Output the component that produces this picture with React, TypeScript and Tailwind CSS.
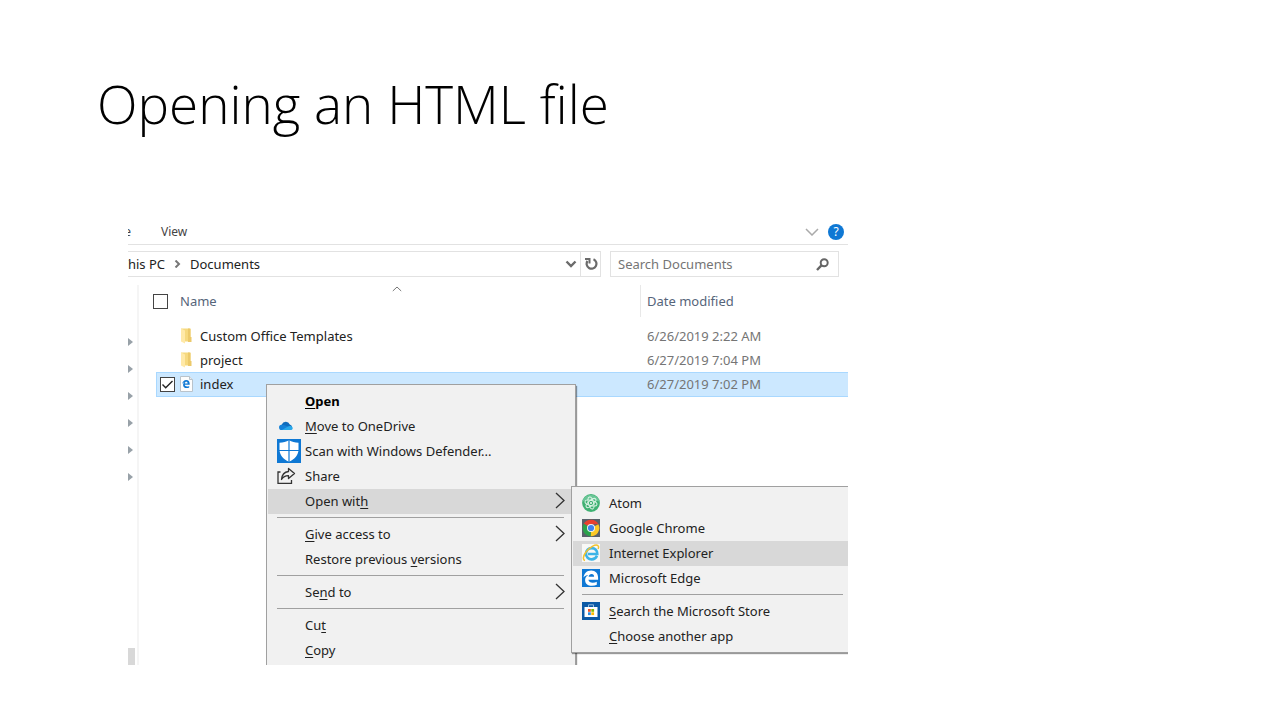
import type { ReactNode } from "react";

const files = [
  { name: "Custom Office Templates", date: "6/26/2019 2:22 AM", kind: "folder", selected: false },
  { name: "project", date: "6/27/2019 7:04 PM", kind: "folder", selected: false },
  { name: "index", date: "6/27/2019 7:02 PM", kind: "html", selected: true },
];

function FolderIcon() {
  return (
    <svg width="12" height="16" viewBox="0 0 12 16" aria-hidden="true" className="shrink-0">
      <path d="M1 .5h8.500l1 1v12H3z" fill="#f6d97f" />
      <path d="M8 .5h2.500v8.500H11.500v5H8z" fill="#ecc96a" />
      <path d="M1 .5l4 2v13L1 13.500z" fill="#ffe9a8" />
    </svg>
  );
}

function HtmlIcon() {
  return (
    <svg width="13" height="16" viewBox="0 0 13 16" aria-hidden="true" className="shrink-0">
      <path d="M.5.5h9l3 3v12H.5z" fill="#fdfdfd" stroke="#b9c3cb" />
      <path d="M9.500.5v3h3" fill="#e6eaed" stroke="#b9c3cb" />
      <g transform="translate(2 3.500) scale(.52)">
        <path d="M.5 8.500C1.100 4.300 3.800 1 8.200 1c4.300 0 6.600 3 6.600 7v2.300H5.300c.3 2 2 3 4.500 3 1.500 0 2.900-.4 4-1v3c-1.300.8-2.900 1.200-4.800 1.200-4.400 0-6.900-2.400-6.900-6 0-2.300 1.200-4 3.300-5C3.300 5.700 1.700 7 .5 8.500zm4.900-1h5.400c0-1.900-.8-3-2.500-3-1.600 0-2.600 1.200-2.900 3z" fill="#0f78d4" />
      </g>
    </svg>
  );
}

function OneDriveIcon() {
  return (
    <svg width="14" height="10" viewBox="0 0 14 10" aria-hidden="true" className="ml-0.5">
      <path d="M4 8.500A3.200 3.200 0 0 1 2.800 3.600 4.300 4.300 0 0 1 10.800 3.400 2.900 2.900 0 0 1 11 9H4z" fill="#0f6cbd" />
      <path d="M2.700 9A2.600 2.600 0 0 1 2.600 3.800C5 3.500 7 4.800 9 5.800L11.500 9z" fill="#1480d8" />
      <path d="M3 9l5.500-3.300c1.500-1 4.800-1 5.200 1.200C13.800 8.300 12.800 9 11.500 9z" fill="#28a8ea" />
    </svg>
  );
}

function DefenderIcon() {
  return (
    <svg width="24" height="24" viewBox="0 0 24 24" aria-hidden="true">
      <path d="M0 0h24v24H0z" fill="#0f78d4" />
      <path d="M12 1.200c2.800 1.700 5.800 2.400 9.500 2.600v6.700c0 5.500-3.700 9.500-9.500 12.300-5.800-2.800-9.500-6.800-9.500-12.300V3.800c3.700-.2 6.700-.9 9.500-2.600z" fill="#fff" />
      <path d="M12 1v22M2 11.500h20" stroke="#0f78d4" strokeWidth="1.200" />
    </svg>
  );
}

function ShareIcon() {
  return (
    <svg width="19" height="18" viewBox="0 0 19 18" fill="none" stroke="#333" strokeWidth="1.300" aria-hidden="true">
      <path d="M3.500 5H1v11.300h13.500V13" />
      <path d="M11.500 1.500l6 5-6 5V8.700C8.300 8.600 6.200 9.800 4.500 12.500 4.900 8 7.300 5 11.500 4.500z" strokeLinejoin="round" />
    </svg>
  );
}

function AtomIcon() {
  return (
    <svg width="18" height="18" viewBox="0 0 19 19" fill="none" aria-hidden="true">
      <circle cx="9.500" cy="9.500" r="9.400" fill="#3fb172" />
      <path d="M.5 8a9.200 9.200 0 0 1 18 0c-5-2-12-2-18 0z" fill="#69c596" />
      <g stroke="#dff5e8" strokeWidth="1">
        <ellipse cx="9.500" cy="9.500" rx="2.700" ry="6.500" transform="rotate(-15 9.500 9.500)" />
        <ellipse cx="9.500" cy="9.500" rx="2.700" ry="6.500" transform="rotate(48 9.500 9.500)" />
        <ellipse cx="9.500" cy="9.500" rx="2.700" ry="6.500" transform="rotate(105 9.500 9.500)" />
      </g>
      <circle cx="9.500" cy="9.500" r="1" fill="#fff" />
    </svg>
  );
}

function ChromeIcon() {
  return (
    <svg width="18" height="18" viewBox="0 0 18 18" aria-hidden="true">
      <path d="M0 0h18v18H0z" fill="#59616b" />
      <path d="M9 9L1.800 4.800A8.300 8.300 0 0 1 16.400 5.200H9z" fill="#e8402f" />
      <path d="M9 9l7.400-3.800A8.300 8.300 0 0 1 8.600 17.300z" fill="#fbc926" />
      <path d="M9 9l-.4 8.300A8.300 8.300 0 0 1 1.800 4.800z" fill="#2ba24c" />
      <circle cx="9" cy="9" r="4" fill="#f3f5f5" />
      <circle cx="9" cy="9" r="3.100" fill="#3f83ee" />
    </svg>
  );
}

function ExplorerIcon() {
  return (
    <svg width="18" height="18" viewBox="0 0 18 18" fill="none" aria-hidden="true">
      <path d="M0 0h18v18H0z" fill="#f8f8f6" />
      <path d="M15 11.800c-1 2.400-3 3.600-5.300 3.600-3.300 0-5.700-2.500-5.700-5.700s2.400-5.600 5.700-5.600c3.400 0 5.600 2.300 5.600 5.900H6" stroke="#3db4e7" strokeWidth="2.600" />
      <path d="M3 16.500c-2.500-.4-2-4.500 1-8.500 3.500-4.700 9.500-8 11.800-6.500 1 .7.900 2.200.3 3.500" stroke="#f2c230" strokeWidth="1.500" />
    </svg>
  );
}

function EdgeIcon() {
  return (
    <svg width="18" height="18" viewBox="0 0 18 18" aria-hidden="true">
      <path d="M0 0h18v18H0z" fill="#0f78d4" />
      <path d="M1.500 8.500C2.100 4.300 4.800 1.500 9.200 1.500c4.300 0 6.900 3 6.900 7.200v2H6.400c.3 2 2 3 4.400 3 1.500 0 2.900-.4 4-1v3c-1.300.7-2.900 1.100-4.800 1.100-4.300 0-6.900-2.400-6.900-5.900 0-2.200 1.200-4 3.300-5C4.300 6 2.600 7 1.500 8.500zm5.100-.8h5.500c0-1.700-.8-2.600-2.500-2.600-1.600 0-2.600 1-3 2.600z" fill="#fff" />
    </svg>
  );
}

function StoreIcon() {
  return (
    <svg width="18" height="18" viewBox="0 0 18 18" aria-hidden="true">
      <path d="M0 0h18v18H0z" fill="#0b59a5" />
      <path d="M6.500 5V2.800h5V5" fill="none" stroke="#8fb8dd" />
      <path d="M2.500 5h13v10h-13z" fill="#fff" />
      <path d="M6 7h2.800v2.800H6z" fill="#f25022" />
      <path d="M9.300 7h2.800v2.800H9.300z" fill="#7fba00" />
      <path d="M6 10.300h2.800v2.800H6z" fill="#2a8fe0" />
      <path d="M9.300 10.300h2.800v2.800H9.300z" fill="#ffb900" />
    </svg>
  );
}

function Hot({ children }: { children: ReactNode }) {
  return <span className="underline underline-offset-2">{children}</span>;
}

type ItemProps = { icon?: ReactNode; active?: boolean; arrow?: boolean; bold?: boolean; sub?: boolean; children: ReactNode };

function MenuItem({ icon, active, arrow, bold, sub, children }: ItemProps) {
  return (
    <button
      type="button"
      role="menuitem"
      className={`flex h-[25px] w-full items-center pb-px pl-[9px] text-left whitespace-nowrap ${active ? "bg-[#d8d8d8]" : ""} ${bold ? "font-bold text-black" : ""}`}
    >
      <span className={`flex shrink-0 items-center ${sub ? "w-[27px]" : "w-7"}`}>{icon}</span>
      <span className="flex-1">{children}</span>
      {arrow && (
        <svg width="10" height="18" viewBox="0 0 10 18" fill="none" stroke="#333" strokeWidth="1.300" aria-hidden="true" className="mr-[9px]">
          <path d="M1 1l8 7.500L1 16" />
        </svg>
      )}
    </button>
  );
}

function Separator() {
  return (
    <div role="separator" className="h-2 pt-[3px] pr-2.5 pl-[9px]">
      <div className="h-px bg-[#a0a0a0]" />
    </div>
  );
}

function AddressBar() {
  return (
    <div className="mt-1.5 flex h-[26px] gap-[9px] pr-[9px]">
      <div className="flex min-w-0 flex-1 items-center border border-l-0 border-[#e2e2e2]">
        <button type="button" className="flex w-[37px] justify-end overflow-hidden whitespace-nowrap">This PC</button>
        <svg width="7" height="8" viewBox="0 0 7 8" fill="none" stroke="#777" strokeWidth="2" aria-hidden="true" className="mx-[9px]">
          <path d="M1.500.5L5 4 1.500 7.500" />
        </svg>
        <button type="button">Documents</button>
        <button type="button" aria-label="Previous locations" className="mr-[3px] ml-auto">
          <svg width="12" height="8" viewBox="0 0 12 8" fill="none" stroke="#6b6b6b" strokeWidth="2.400">
            <path d="M1.500 1.500L6 6l4.500-4.500" />
          </svg>
        </button>
        <button type="button" aria-label="Refresh" className="flex h-full w-5 items-center justify-center border-l border-[#e2e2e2]">
          <svg width="14" height="14" viewBox="0 0 14 14" fill="none" stroke="#6b6b6b" strokeWidth="2.200">
            <path d="M9.500 2.300A4.900 4.900 0 1 1 3.500 4" />
            <path d="M1 1.900h4.500v4.600" strokeWidth="2" />
          </svg>
        </button>
      </div>
      <div className="flex w-[229px] items-center border border-[#e2e2e2] pr-[9px] pl-[7px]">
        <input type="search" aria-label="Search Documents" placeholder="Search Documents" className="min-w-0 flex-1 outline-none placeholder:text-[#757575]" />
        <svg width="13" height="13" viewBox="0 0 13 13" fill="none" stroke="#666" strokeWidth="2" aria-hidden="true">
          <circle cx="8.200" cy="4.700" r="3.500" />
          <path d="M5.700 7.200L1 12" strokeWidth="2.400" />
        </svg>
      </div>
    </div>
  );
}

function CheckBox({ checked, label }: { checked?: boolean; label: string }) {
  return (
    <span className="relative block size-[15px]">
      <input type="checkbox" aria-label={label} defaultChecked={checked} className="block size-[15px] appearance-none border border-[#444] bg-white" />
      {checked && (
        <svg width="15" height="15" viewBox="0 0 15 15" fill="none" stroke="#222" strokeWidth="1.400" aria-hidden="true" className="pointer-events-none absolute inset-0">
          <path d="M2.500 7.500l3.200 3.200L12.500 4" />
        </svg>
      )}
    </span>
  );
}

function FileList() {
  return (
    <table className="ml-2.5 flex-1 table-fixed border-collapse text-left">
      <colgroup>
        <col className="w-[7px]" />
        <col className="w-6" />
        <col />
        <col className="w-[208px]" />
      </colgroup>
      <thead className="text-[#56657a]">
        <tr>
          <th colSpan={2} className="h-[39px] p-0 align-top">
            <div className="flex h-8 items-center pl-1">
              <CheckBox label="Select all" />
            </div>
          </th>
          <th className="relative p-0 align-top font-normal">
            <div className="flex h-8 items-center">Name</div>
            <svg width="10" height="6" viewBox="0 0 10 6" fill="none" stroke="#777" aria-hidden="true" className="absolute top-px left-[46%]">
              <path d="M.8 5L5 1l4.200 4" />
            </svg>
          </th>
          <th className="p-0 align-top font-normal">
            <div className="flex h-8 items-center border-l border-[#e8e8e8] pl-1.5">Date modified</div>
          </th>
        </tr>
      </thead>
      <tbody>
        {files.map((f) => {
          const fill = f.selected ? "border-y border-[#a9d8ff] bg-[#cce8ff]" : "";
          return (
            <tr key={f.name} className="h-6">
              <td className="p-0" />
              <td className={`p-0 pl-[3px] ${fill} ${f.selected ? "border-l" : ""}`}>
                {f.selected && <CheckBox checked label={`Select ${f.name}`} />}
              </td>
              <td className={`p-0 ${fill}`}>
                <div className="flex items-center">
                  <span className="w-5">{f.kind === "folder" ? <FolderIcon /> : <HtmlIcon />}</span>
                  {f.name}
                </div>
              </td>
              <td className={`p-0 pl-[7px] text-[#757575] ${fill}`}>{f.date}</td>
            </tr>
          );
        })}
      </tbody>
    </table>
  );
}

function NavPane() {
  return (
    <nav aria-label="Folders" className="flex w-[11px] shrink-0 flex-col justify-between border-r-2 border-[#f5f5f5] pt-[43px]">
      <div>
        {[0, 1, 2, 3, 4, 5].map((n) => (
          <button key={n} type="button" aria-label="Expand" className="flex h-[27px] items-center">
            <svg width="5" height="8" viewBox="0 0 5 8" aria-hidden="true">
              <path d="M0 0l5 4-5 4z" fill="#98a1a8" />
            </svg>
          </button>
        ))}
      </div>
      <div className="h-[17px] w-[7px] bg-[#d8d8d8]" />
    </nav>
  );
}

function ContextMenu() {
  return (
    <div role="menu" aria-label="File actions" className="absolute top-[164px] left-[138px] w-[310px] border border-[#a0a0a0] bg-[#f1f1f1] px-px py-1 shadow-[1px_2px_1px_rgba(0,0,0,0.4)]">
      <MenuItem bold><Hot>O</Hot>pen</MenuItem>
      <MenuItem icon={<OneDriveIcon />}><Hot>M</Hot>ove to OneDrive</MenuItem>
      <MenuItem icon={<DefenderIcon />}>Scan with Windows Defender...</MenuItem>
      <MenuItem icon={<ShareIcon />}>Share</MenuItem>
      <MenuItem active arrow>Open wit<Hot>h</Hot></MenuItem>
      <Separator />
      <MenuItem arrow><Hot>G</Hot>ive access to</MenuItem>
      <MenuItem>Restore previous <Hot>v</Hot>ersions</MenuItem>
      <Separator />
      <MenuItem arrow>Se<Hot>n</Hot>d to</MenuItem>
      <Separator />
      <MenuItem>Cu<Hot>t</Hot></MenuItem>
      <MenuItem><Hot>C</Hot>opy</MenuItem>
    </div>
  );
}

function OpenWithMenu() {
  return (
    <div role="menu" aria-label="Open with" className="absolute top-[266px] left-[443px] w-[284px] border border-[#a0a0a0] bg-[#f1f1f1] px-px pt-1 pb-[3px] shadow-[1px_1px_1px_rgba(0,0,0,0.4)]">
      <MenuItem sub icon={<AtomIcon />}>Atom</MenuItem>
      <MenuItem sub icon={<ChromeIcon />}>Google Chrome</MenuItem>
      <MenuItem sub active icon={<ExplorerIcon />}>Internet Explorer</MenuItem>
      <MenuItem sub icon={<EdgeIcon />}>Microsoft Edge</MenuItem>
      <Separator />
      <MenuItem sub icon={<StoreIcon />}><Hot>S</Hot>earch the Microsoft Store</MenuItem>
      <MenuItem sub><Hot>C</Hot>hoose another app</MenuItem>
    </div>
  );
}

export default function App() {
  return (
    <main className="min-h-screen bg-white px-24 pt-[68px] text-black">
      <h1 className="pl-px font-['Open_Sans',sans-serif] text-[53px] leading-[72px] font-light">Opening an HTML file</h1>
      <section aria-label="Documents" className="relative mt-20 ml-8 flex h-[445px] w-[720px] max-w-full flex-col overflow-hidden font-['Noto_Sans',sans-serif] text-[13px] leading-5 text-[#222]">
        <div className="flex h-[25px] shrink-0 items-center border-b border-[#e2e2e2] pr-1 text-[12px] text-[#444]">
          <button type="button" className="flex w-[3px] justify-end overflow-hidden">Share</button>
          <button type="button" className="ml-[30px]">View</button>
          <button type="button" aria-label="Expand the ribbon" className="mr-[9px] ml-auto">
            <svg width="14" height="8" viewBox="0 0 14 8" fill="none" stroke="#aaa" strokeWidth="1.500">
              <path d="M1 1l6 6 6-6" />
            </svg>
          </button>
          <button type="button" aria-label="Help" className="flex size-4 items-center justify-center rounded-full bg-[#0f78d4] text-white">?</button>
        </div>
        <AddressBar />
        <div className="mt-2 flex min-h-0 flex-1 items-stretch">
          <NavPane />
          <div className="flex min-w-0 flex-1 items-start">
            <FileList />
          </div>
        </div>
        <ContextMenu />
        <OpenWithMenu />
      </section>
    </main>
  );
}
